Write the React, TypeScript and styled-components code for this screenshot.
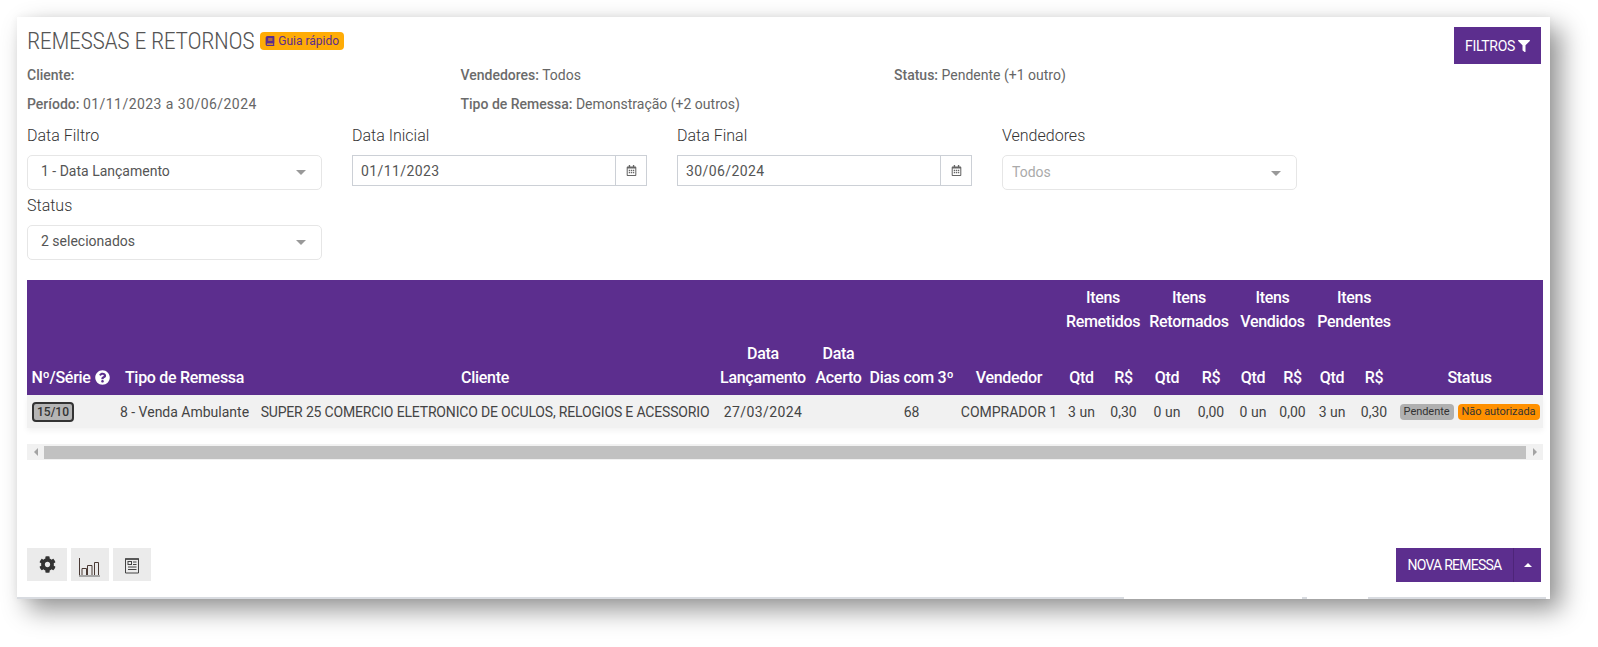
import React from 'react';
import styled, { createGlobalStyle } from 'styled-components';
import { FaBook, FaCog, FaFilter, FaQuestionCircle, FaRegCalendarAlt } from 'react-icons/fa';

const GlobalStyle = createGlobalStyle`
    html, body {
        margin: 0;
        padding: 0;
        background: #fff;
    }
    body {
        font-family: Roboto, "Noto Sans", sans-serif;
        color: #555;
    }
`

const Page = styled.div`
    width: 1598px;
    height: 647px;
    padding: 17px 48px 0 17px;
    box-sizing: border-box;
    overflow: hidden;
`

const Card = styled.div`
    width: 1533px;
    height: 582px;
    padding: 10px 9px 0 10px;
    box-sizing: border-box;
    background: #fff;
    box-shadow: 11px 11px 24px rgba(0, 0, 0, 0.42), 0 0 8px rgba(0, 0, 0, 0.05);
    display: flex;
    flex-direction: column;
`

const TopRow = styled.div`
    height: 33px;
    display: flex;
    align-items: flex-start;
    justify-content: space-between;
`

const TitleRow = styled.div`
    display: flex;
    align-items: center;
    gap: 6px;
`

const Title = styled.h1`
    margin: 0;
    font-size: 24px;
    line-height: 28px;
    font-weight: 300;
    font-stretch: 75%;
    letter-spacing: -0.38px;
    color: #555;
`

const GuideBadge = styled.span`
    height: 18px;
    padding: 0 5px;
    display: flex;
    align-items: center;
    gap: 3px;
    border-radius: 4px;
    background: #ffac06;
    color: #5c2d8d;
    font-size: 12px;
`

const FilterButton = styled.button`
    width: 87px;
    height: 37px;
    border: 0;
    background: #5c2e8e;
    color: #fff;
    font: 400 14px Roboto, sans-serif;
    letter-spacing: -0.3px;
    display: flex;
    align-items: center;
    justify-content: center;
    gap: 3px;
`

const Summary = styled.div`
    display: grid;
    grid-template-columns: 433.5px 433.5px 1fr;
    grid-auto-rows: 29px;
    align-items: center;
    font-size: 14px;
    color: #666;
`

const SummaryItem = styled.div`
    b {
        font-weight: 500;
        color: #6b6b6b;
    }
`

const DateText = styled.span`
    letter-spacing: 0.45px;
`

const FilterGrid = styled.div`
    display: grid;
    grid-template-columns: repeat(4, 295px);
    column-gap: 30px;
    margin-top: 7px;
`

const Field = styled.div`
    height: 70px;
`

const FieldLabel = styled.label`
    display: block;
    height: 25px;
    line-height: 21px;
    font-size: 16px;
    font-weight: 300;
    color: #333;
    margin-bottom: 5px;
`

const SelectBox = styled.div<{ $disabled?: boolean }>`
    height: 35px;
    padding: 0 15px ${(p) => (p.$disabled ? 1 : 3)}px ${(p) => (p.$disabled ? 9 : 13)}px;
    box-sizing: border-box;
    display: flex;
    align-items: center;
    justify-content: space-between;
    border: 1px solid #e6e6e6;
    border-radius: 5px;
    font-size: 14px;
    color: ${(p) => (p.$disabled ? '#aaa' : '#555')};
`

const Caret = styled.span`
    width: 0;
    height: 0;
    margin-top: 3px;
    border-left: 5px solid transparent;
    border-right: 5px solid transparent;
    border-top: 5px solid #999;
`

const DateBox = styled.div`
    height: 31px;
    display: flex;
    border: 1px solid #ccd0d6;
    box-sizing: border-box;
    font-size: 14px;
    color: #555;
`

const DateValue = styled.div`
    flex: 1;
    padding-left: 8px;
    display: flex;
    align-items: center;
    letter-spacing: 0.4px;
`

const DateAddon = styled.div`
    width: 30px;
    display: flex;
    align-items: center;
    justify-content: center;
    border-left: 1px solid #ccd0d6;
    color: #666;
    font-size: 11px;
`

const Table = styled.table`
    width: 1516px;
    margin-top: 15px;
    border-collapse: collapse;
    table-layout: fixed;
    font-size: 14px;
`

const HeadRow = styled.tr<{ $tall?: boolean }>`
    height: ${(p) => (p.$tall ? 55 : 60)}px;
    background: #5c2e8e;
    color: #fff;
`

const Th = styled.th<{ $bottom?: boolean }>`
    padding: 0 0 ${(p) => (p.$bottom ? 5 : 0)}px;
    vertical-align: ${(p) => (p.$bottom ? 'bottom' : 'middle')};
    font-size: 16px;
    line-height: 24px;
    font-weight: 500;
    letter-spacing: -0.3px;
    text-align: center;
    white-space: nowrap;
`

const HelpIcon = styled(FaQuestionCircle)`
    font-size: 15px;
    vertical-align: -2px;
    margin-left: 4px;
`

const BodyRow = styled.tr`
    height: 33px;
    background: #f1f1f1;
    box-shadow: 0 3px 6px rgba(0, 0, 0, 0.05);
`

const Td = styled.td<{ $left?: boolean; $spacing?: number }>`
    padding: ${(p) => (p.$left ? '0 0 0 5px' : '0')};
    text-align: ${(p) => (p.$left ? 'left' : 'center')};
    letter-spacing: ${(p) => p.$spacing ?? 0}px;
    white-space: nowrap;
    overflow: visible;
    color: #444;
`

const SerialBadge = styled.span`
    width: 42px;
    height: 20px;
    display: block;
    box-sizing: border-box;
    border: 2px solid #333;
    border-radius: 4px;
    background: #b5b5b5;
    color: #333;
    font-size: 12px;
    font-weight: 500;
    line-height: 16px;
    text-align: center;
`

const StatusCell = styled.div`
    display: flex;
    justify-content: center;
    gap: 4px;
`

const StatusTag = styled.span<{ $color: string }>`
    height: 16px;
    padding: 0 4px;
    border-radius: 4px;
    background: ${(p) => p.$color};
    color: #333;
    font-size: 11px;
    line-height: 16px;
    letter-spacing: -0.05px;
`

const ScrollBar = styled.div`
    height: 16px;
    width: 1516px;
    margin-top: 16px;
    display: flex;
    align-items: center;
    background: #f1f1f1;
    color: #999;
`

const ScrollArrow = styled.span<{ $dir: 'left' | 'right' }>`
    width: 17px;
    display: flex;
    justify-content: center;

    &::before {
        content: '';
        border-top: 4px solid transparent;
        border-bottom: 4px solid transparent;
        ${(p) => (p.$dir === 'left' ? 'border-right: 4px solid #a3a3a3;' : 'border-left: 4px solid #a3a3a3;')}
    }
`

const ScrollThumb = styled.div`
    flex: 1;
    height: 13px;
    background: #c1c1c1;
`

const Footer = styled.div`
    margin-top: 88px;
    display: flex;
    justify-content: space-between;
`

const ToolGroup = styled.div`
    display: flex;
    gap: 4px;
`

const ToolButton = styled.button<{ $width: number }>`
    width: ${(p) => p.$width}px;
    height: 33px;
    padding: 0;
    border: 0;
    background: #ebebeb;
    color: #333;
    display: flex;
    align-items: center;
    justify-content: center;
    font-size: 17px;
`

const SplitButton = styled.div`
    height: 34px;
    display: flex;
    background: #5c2e8e;
    color: #fff;
    font-size: 14px;
    letter-spacing: -0.75px;
`

const SplitMain = styled.div`
    width: 117px;
    display: flex;
    align-items: center;
    justify-content: center;
    border-right: 1px solid #4e2579;
`

const SplitToggle = styled.div`
    width: 27px;
    display: flex;
    align-items: center;
    justify-content: center;

    &::before {
        content: '';
        border-left: 4px solid transparent;
        border-right: 4px solid transparent;
        border-bottom: 4px solid #fff;
    }
`

const BottomEdge = styled.div`
    height: 2px;
    margin: auto -9px 0 -10px;
    display: flex;
`

const EdgePiece = styled.span<{ $width: number; $line?: boolean }>`
    width: ${(p) => p.$width}px;
    background: ${(p) => (p.$line ? '#d8dbe0' : 'transparent')};
`

const ChartIcon = () => (
    <svg width="22" height="26" viewBox="0 -6 22 26" fill="none" stroke="#4a3a35" strokeWidth="1">
        <path d="M0.5 0v17.5" />
        <path d="M3 17v-6.5h4.5V17M8.5 17V7.5H13V17M15.5 17V4.5h4V17" />
        <path d="M0 18h21" stroke="#8f8f8f" strokeWidth="1.5" />
    </svg>
)

const DocIcon = () => (
    <svg width="14" height="19" viewBox="0 -3 14 19" fill="none" stroke="#444" strokeWidth="1">
        <path d="M0.5 15V1H13.5V15H0.5" />
        <path d="M0 1h14" strokeWidth="1.5" />
        <rect x="3" y="3.5" width="3.5" height="3" />
        <path d="M8 4h3.5M8 6.5h3.5M3 9h8.5M3 11.5h8.5" />
    </svg>
)

const widths = [87, 141, 460, 96, 55, 91, 104, 41, 43, 44, 44, 40, 39, 40, 44, 147];

const groups = ['Remetidos', 'Retornados', 'Vendidos', 'Pendentes'];

const App = () => {
    return (
        <Page>
            <GlobalStyle />
            <Card>
                <TopRow>
                    <TitleRow>
                        <Title>REMESSAS E RETORNOS</Title>
                        <GuideBadge><FaBook size={10} />Guia rápido</GuideBadge>
                    </TitleRow>
                    <FilterButton>FILTROS<FaFilter size={12} /></FilterButton>
                </TopRow>

                <Summary>
                    <SummaryItem><b>Cliente:</b></SummaryItem>
                    <SummaryItem><b>Vendedores:</b> Todos</SummaryItem>
                    <SummaryItem><b>Status:</b> Pendente (+1 outro)</SummaryItem>
                    <SummaryItem><b>Período:</b> <DateText>01/11/2023 a 30/06/2024</DateText></SummaryItem>
                    <SummaryItem><b>Tipo de Remessa:</b> Demonstração (+2 outros)</SummaryItem>
                </Summary>

                <FilterGrid>
                    <Field>
                        <FieldLabel>Data Filtro</FieldLabel>
                        <SelectBox>1 - Data Lançamento<Caret /></SelectBox>
                    </Field>
                    <Field>
                        <FieldLabel>Data Inicial</FieldLabel>
                        <DateBox>
                            <DateValue>01/11/2023</DateValue>
                            <DateAddon><FaRegCalendarAlt /></DateAddon>
                        </DateBox>
                    </Field>
                    <Field>
                        <FieldLabel>Data Final</FieldLabel>
                        <DateBox>
                            <DateValue>30/06/2024</DateValue>
                            <DateAddon><FaRegCalendarAlt /></DateAddon>
                        </DateBox>
                    </Field>
                    <Field>
                        <FieldLabel>Vendedores</FieldLabel>
                        <SelectBox $disabled>Todos<Caret /></SelectBox>
                    </Field>
                    <Field>
                        <FieldLabel>Status</FieldLabel>
                        <SelectBox>2 selecionados<Caret /></SelectBox>
                    </Field>
                </FilterGrid>

                <Table>
                    <colgroup>
                        {widths.map((w, i) => <col key={i} width={w} />)}
                    </colgroup>
                    <thead>
                        <HeadRow>
                            <Th colSpan={7} />
                            {groups.map((g) => <Th key={g} colSpan={2}>Itens<br />{g}</Th>)}
                            <Th />
                        </HeadRow>
                        <HeadRow $tall>
                            <Th $bottom>Nº/Série<HelpIcon /></Th>
                            <Th $bottom>Tipo de Remessa</Th>
                            <Th $bottom>Cliente</Th>
                            <Th $bottom>Data<br />Lançamento</Th>
                            <Th $bottom>Data<br />Acerto</Th>
                            <Th $bottom>Dias com 3º</Th>
                            <Th $bottom>Vendedor</Th>
                            {groups.map((g) => (
                                <React.Fragment key={g}>
                                    <Th $bottom>Qtd</Th>
                                    <Th $bottom>R$</Th>
                                </React.Fragment>
                            ))}
                            <Th $bottom>Status</Th>
                        </HeadRow>
                    </thead>
                    <tbody>
                        <BodyRow>
                            <Td $left><SerialBadge>15/10</SerialBadge></Td>
                            <Td>8 - Venda Ambulante</Td>
                            <Td $spacing={-0.17}>SUPER 25 COMERCIO ELETRONICO DE OCULOS, RELOGIOS E ACESSORIO</Td>
                            <Td $spacing={0.4}>27/03/2024</Td>
                            <Td />
                            <Td>68</Td>
                            <Td>COMPRADOR 1</Td>
                            <Td>3 un</Td>
                            <Td>0,30</Td>
                            <Td>0 un</Td>
                            <Td>0,00</Td>
                            <Td>0 un</Td>
                            <Td>0,00</Td>
                            <Td>3 un</Td>
                            <Td>0,30</Td>
                            <Td>
                                <StatusCell>
                                    <StatusTag $color="#b0b0b0">Pendente</StatusTag>
                                    <StatusTag $color="#ff9000">Não autorizada</StatusTag>
                                </StatusCell>
                            </Td>
                        </BodyRow>
                    </tbody>
                </Table>

                <ScrollBar>
                    <ScrollArrow $dir="left" />
                    <ScrollThumb />
                    <ScrollArrow $dir="right" />
                </ScrollBar>

                <Footer>
                    <ToolGroup>
                        <ToolButton $width={40}><FaCog /></ToolButton>
                        <ToolButton $width={38}><ChartIcon /></ToolButton>
                        <ToolButton $width={38}><DocIcon /></ToolButton>
                    </ToolGroup>
                    <SplitButton>
                        <SplitMain>NOVA REMESSA</SplitMain>
                        <SplitToggle />
                    </SplitButton>
                </Footer>

                <BottomEdge>
                    <EdgePiece $line $width={1107} />
                    <EdgePiece $width={178} />
                    <EdgePiece $line $width={5} />
                    <EdgePiece $width={61} />
                    <EdgePiece $line $width={178} />
                </BottomEdge>
            </Card>
        </Page>
    )
}

export default App;
